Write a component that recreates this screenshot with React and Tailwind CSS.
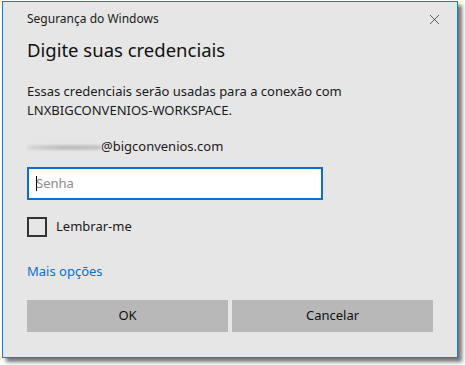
import { X } from 'lucide-react';

export default function App() {
  return (
    <div className="w-[465px] h-[365px] bg-white" style={{ fontFamily: '"Noto Sans", "Open Sans", sans-serif' }}>
      <div className="ml-[2px] mt-[1px] w-[456px] h-[357px] bg-[#e6e6e6] border border-[#1a78d4] shadow-[4px_4px_4px_rgba(0,0,0,0.55)] flex flex-col">
        {/* title bar */}
        <div className="h-[34px] flex items-center justify-between pl-[24px] pr-[14px]">
          <span className="text-[12px] text-[#1a1a1a]">Segurança do Windows</span>
          <X size={17} strokeWidth={1} className="text-[#222]" />
        </div>

        <div className="px-[24px] flex flex-col">
          <h1 className="text-[18.5px] leading-[28px] text-[#111]">Digite suas credenciais</h1>

          <p className="mt-[18px] text-[13px] leading-[19px] text-[#1a1a1a]">
            Essas credenciais serão usadas para a conexão com
            <br />
            LNXBIGCONVENIOS-WORKSPACE.
          </p>

          <div className="mt-[17px] flex items-center h-[20px] text-[13px] text-[#1a1a1a]">
            <span className="w-[74px] h-[5px] rounded-full bg-gradient-to-r from-[#d8d8d8] via-[#bdbdbd] to-[#c4c4c4] blur-[1px]" />
            <span>@bigconvenios.com</span>
          </div>

          <div className="mt-[10px] w-[296px] h-[33px] bg-white border-2 border-[#0c6fd0] flex items-center pl-[7px]">
            <span className="w-[1px] h-[15px] bg-black" />
            <span className="text-[13px] text-[#8a8a8a] -ml-[1px]">Senha</span>
          </div>

          <label className="mt-[17px] flex items-center gap-[9px]">
            <span className="w-[20px] h-[20px] border-2 border-[#333]" />
            <span className="text-[13px] text-[#1a1a1a]">Lembrar-me</span>
          </label>

          <a className="mt-[24px] text-[13px] text-[#0a6fc9] leading-[20px]">Mais opções</a>

          <div className="mt-[19px] flex gap-[4px]">
            <button className="w-[201px] h-[32px] bg-[#b8b8b8] text-[13px] text-[#111]">OK</button>
            <button className="w-[201px] h-[32px] bg-[#b8b8b8] text-[13px] text-[#111]">Cancelar</button>
          </div>
        </div>
      </div>
    </div>
  );
}
